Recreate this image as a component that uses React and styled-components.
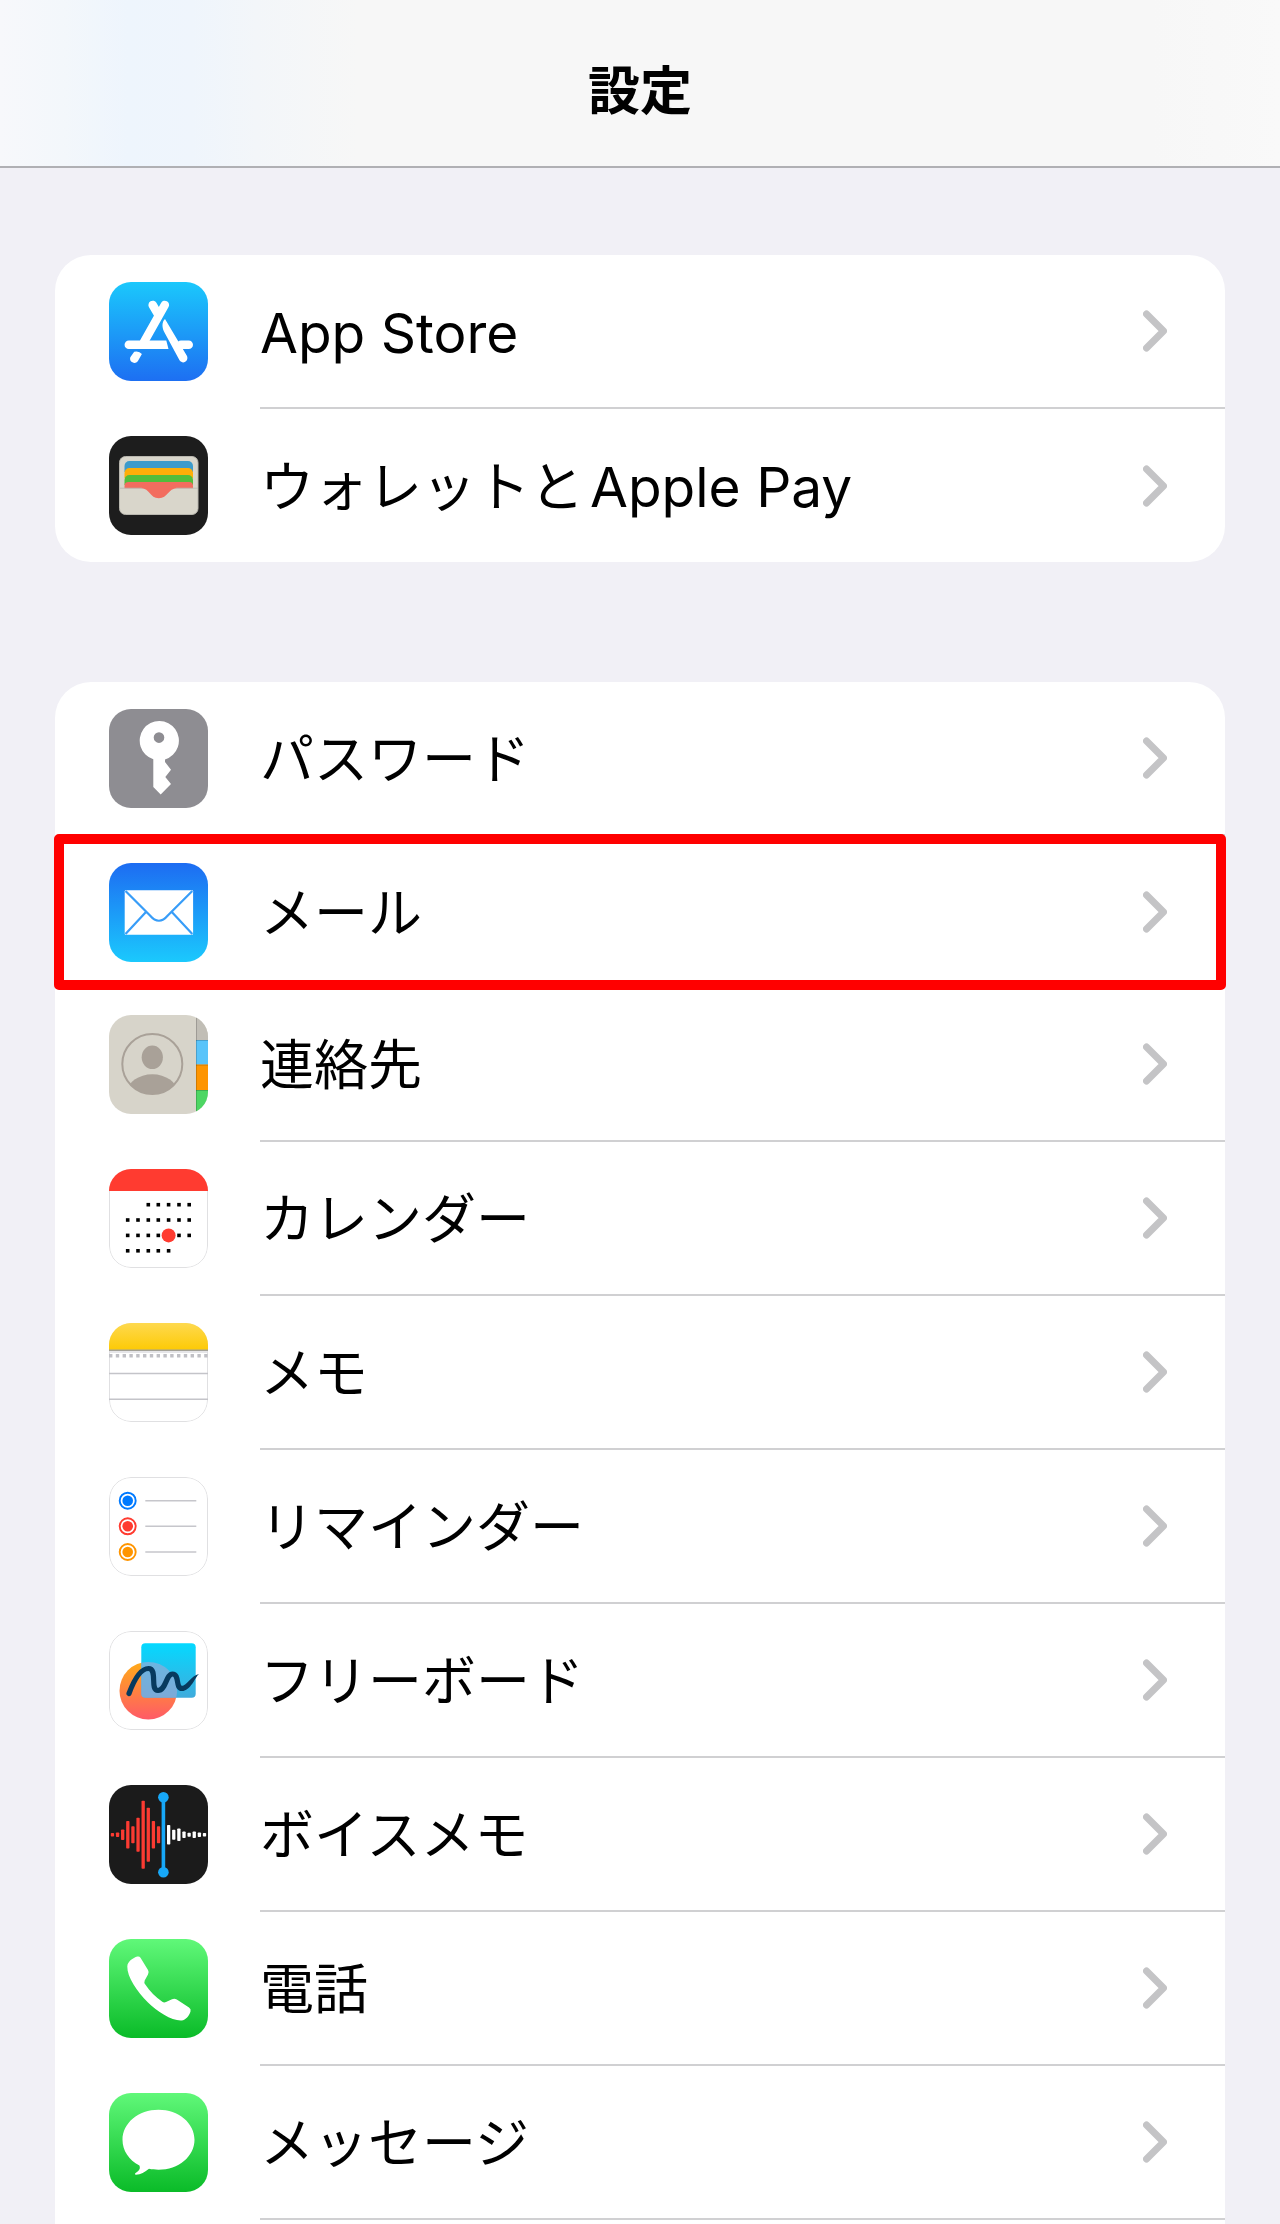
import React from 'react';
import styled, { createGlobalStyle } from 'styled-components';

const GlobalStyle = createGlobalStyle`
  *, *::before, *::after { box-sizing: border-box; }
  html { background: #f1f0f6; }
  body {
    margin: 0;
    color: #000;
    font-family: Inter, "Noto Sans CJK JP", sans-serif;
  }
`;

const Page = styled.div`
  display: flex;
  flex-direction: column;
  min-height: 100vh;
  background: #f1f0f6;
`;

const Header = styled.header`
  display: flex;
  justify-content: center;
  padding: 54px 0 36px;
  border-bottom: 2px solid #b0b0b4;
  background: linear-gradient(90deg, #f7f8fb 0%, #f3f7fb 5%, #eef5fd 10%, #eff5fc 15%, #f3f6f9 20%, #f7f7f7 28%, #f7f7f7 90%, #f9f9f9 100%);
`;

const Title = styled.h1`
  margin: 0;
  font-size: 52px;
  line-height: 76px;
  font-weight: 700;
`;

const Main = styled.main`
  display: flex;
  flex: 1;
  flex-direction: column;
  gap: 120px;
  padding: 87px 55px 0;
`;

const Card = styled.ul`
  margin: 0;
  padding: 0;
  list-style: none;
  background: #fff;
  border-radius: ${(p) => (p.$continues ? '36px 36px 0 0' : '36px')};
  flex: ${(p) => (p.$continues ? '1' : 'none')};
`;

const RowLink = styled.a`
  position: relative;
  display: flex;
  gap: 52px;
  padding-left: 54px;
  color: inherit;
  text-decoration: none;
`;

const Highlight = styled.span`
  position: absolute;
  inset: -2px -1px;
  border: 10px solid #f00;
  border-radius: 5px;
  pointer-events: none;
`;

const AppIcon = styled.svg`
  display: block;
  flex: none;
  width: 99px;
  height: 99px;
  margin-top: 27px;
  border-radius: 22px;
`;

const RowBody = styled.span`
  display: flex;
  flex: 1;
  align-items: center;
  justify-content: space-between;
  padding-right: 58px;
  border-bottom: ${(p) => (p.$divider ? '2px solid #d0d0d2' : 'none')};
`;

const Label = styled.span`
  display: flex;
  align-items: baseline;
  gap: 6px;
  font-size: 54px;
  line-height: 80px;
  padding: 38px 0 34px;
`;

const Latin = styled.span`
  font-size: 55px;
`;

const ChevronSvg = styled.svg`
  flex: none;
  width: 24px;
  height: 42px;
`;

const Chevron = () => (
  <ChevronSvg viewBox="0 0 24 42" fill="none" stroke="#c4c4c6" strokeWidth="7" strokeLinecap="round" strokeLinejoin="round" aria-hidden="true">
    <path d="M3.5 4 20.5 21 3.5 38" />
  </ChevronSvg>
);

const Gradient = ({ id, from, to }) => (
  <linearGradient id={id} x1="0" y1="0" x2="0" y2="1">
    <stop offset="0" stopColor={from} />
    <stop offset="1" stopColor={to} />
  </linearGradient>
);

const Frame = () => <rect x="0.5" y="0.5" width="98" height="98" rx="21.5" fill="none" stroke="#e0e0e2" />;

const AppStoreIcon = () => (
  <>
    <defs><Gradient id="store" from="#1bc8fc" to="#1d6ff2" /></defs>
    <rect width="99" height="99" fill="url(#store)" />
    <g stroke="#fff" strokeWidth="8.6" strokeLinecap="round" fill="none">
      <path d="M55.8 23 35 60M43.7 23l5 8.6M72 62.7h7.7" />
    </g>
    <path fill="#fff" d="M19.8 58.5H57.3L59.5 67H19.8a4.25 4.25 0 0 1 0-8.5zM56 37C52.5 40 53 46 55.5 50.5L70.5 78.3C74 83 80 79 78 74zM25.2 69.8Q30 68.600 32.900 72L28.800 79.200A4.300 4.300 0 0 1 21.300 75.300z" />
  </>
);

const WalletIcon = () => (
  <>
    <rect width="99" height="99" fill="#1d1d1d" />
    <rect x="10.5" y="20.5" width="78.5" height="58" rx="6" fill="#d9d6cb" stroke="#b9b7af" />
    <path d="M15.5 36v-6a5 5 0 0 1 5-5h58.5a5 5 0 0 1 5 5v6z" fill="#3d9bcb" />
    <path d="M15.5 42v-5a5 5 0 0 1 5-5h58.5a5 5 0 0 1 5 5v5z" fill="#feae08" />
    <path d="M15.5 49v-5a5 5 0 0 1 5-5h58.5a5 5 0 0 1 5 5v5z" fill="#53bd3b" />
    <path d="M15.5 52.2V50a4 4 0 0 1 4-4h60.500a4 4 0 0 1 4 4v2.200H68c-9 0-9 10-18.200 10S41 52.200 32 52.200z" fill="#f26d5f" />
    <path d="M11 52.2h22M67 52.2h22" stroke="#b9b7af" strokeWidth="0.8" />
  </>
);

const KeyIcon = () => (
  <>
    <rect width="99" height="99" fill="#8e8d92" />
    <path fill="#fff" fillRule="evenodd" d="M44.3 50.3A19.6 19.6 0 1 1 56 50.4V53l6 7.7-5.7 7.300 5.700 7-10.300 10.500-7.400-7.500zM50 23.300a5.300 5.300 0 1 0 0 10.600 5.300 5.300 0 0 0 0-10.600z" />
  </>
);

const MailIcon = () => (
  <>
    <defs><Gradient id="mail" from="#1d6cf2" to="#1bc9fd" /></defs>
    <rect width="99" height="99" fill="url(#mail)" />
    <rect x="15.7" y="27.3" width="68.4" height="44.4" rx="1" fill="#fff" />
    <path d="M16.5 28 41 52.5Q49.9 63 58.8 52.5L83.3 28M36.5 49.5 16.5 71M63.3 49.5 83.3 71" fill="none" stroke="#389df8" strokeWidth="2.2" />
  </>
);

const ContactsIcon = () => (
  <>
    <defs><clipPath id="person"><circle cx="43.3" cy="49" r="30" /></clipPath></defs>
    <rect width="99" height="99" fill="#d7d4ca" />
    <rect x="87" width="12" height="25" fill="#c1beb6" />
    <rect x="87" y="25" width="12" height="24.5" fill="#5ac4fa" />
    <rect x="87" y="49.5" width="12" height="25.5" fill="#fe9502" />
    <rect x="87" y="75" width="12" height="24" fill="#4dd663" />
    <path d="M87.5 0v99M87 25.5h12M87 50h12M87 75.5h12" stroke="#000" strokeOpacity="0.18" />
    <circle cx="43.3" cy="49" r="30" fill="none" stroke="#a9a198" strokeWidth="2" />
    <ellipse cx="43.3" cy="42.3" rx="10.6" ry="11.8" fill="#a9a198" />
    <ellipse cx="43.3" cy="77" rx="25" ry="17.7" fill="#a9a198" clipPath="url(#person)" />
  </>
);

const calendarColumns = [18.7, 29, 39.3, 49.3, 59.6, 70, 80.2];
const calendarRows = [
  { y: 35.7, from: 2, to: 6 },
  { y: 51, from: 0, to: 6 },
  { y: 66.4, from: 0, to: 6 },
  { y: 81.8, from: 0, to: 4 },
];

const CalendarIcon = () => (
  <>
    <rect width="99" height="99" fill="#fff" />
    <Frame />
    <rect width="99" height="22" fill="#ff3b30" />
    {calendarRows.map((row) =>
      calendarColumns.slice(row.from, row.to + 1).map((x) => (
        <rect key={`${x}-${row.y}`} x={x - 1.8} y={row.y - 1.8} width="3.6" height="3.6" />
      ))
    )}
    <circle cx="59.6" cy="66.4" r="7" fill="#ff3b30" />
  </>
);

const NotesIcon = () => (
  <>
    <defs><Gradient id="notes" from="#fed94f" to="#fdca05" /></defs>
    <rect width="99" height="99" fill="#fff" />
    <Frame />
    <rect width="99" height="27" fill="url(#notes)" />
    <path d="M0 27.3h99" stroke="#a3a195" strokeWidth="1.6" />
    <path d="M0 29h99" stroke="#dcdce0" strokeWidth="1.6" />
    <path d="M0 32.7h99" stroke="#c0c0c5" strokeWidth="3.4" strokeDasharray="3.4 3.4" />
    <path d="M0 50.5h99M0 76.3h99" stroke="#c4c4c9" strokeWidth="1.6" />
  </>
);

const reminders = [
  { y: 23.7, color: '#007aff' },
  { y: 49.3, color: '#ff3b30' },
  { y: 75, color: '#ff9500' },
];

const RemindersIcon = () => (
  <>
    <rect width="99" height="99" fill="#fff" />
    <Frame />
    {reminders.map(({ y, color }) => (
      <g key={y}>
        <circle cx="18.7" cy={y} r="8" fill="none" stroke={color} strokeWidth="1.9" />
        <circle cx="18.7" cy={y} r="5.3" fill={color} />
        <path d={`M36.3 ${y}H87.3`} stroke="#c6c6cb" strokeWidth="1.6" />
      </g>
    ))}
  </>
);

const FreeformIcon = () => (
  <>
    <defs>
      <Gradient id="board" from="#04d9ff" to="#40abdc" />
      <Gradient id="ball" from="#ffab18" to="#ff5a67" />
      <clipPath id="sheet"><rect x="32.3" y="12.3" width="54.4" height="54.4" rx="4" /></clipPath>
    </defs>
    <rect width="99" height="99" fill="#fff" />
    <Frame />
    <circle cx="39.3" cy="59.7" r="28.8" fill="url(#ball)" />
    <rect x="32.3" y="12.3" width="54.4" height="54.4" rx="4" fill="url(#board)" />
    <circle cx="39.3" cy="59.7" r="28.8" fill="#a3a8d4" fillOpacity="0.6" clipPath="url(#sheet)" />
    <path d="M20 62.5C25 49 32 37.5 39.5 37.5 49 37.5 40.5 59.5 49 59.5 57 59.5 57 43 63.5 43 71 43 66 57.5 73 57.5" fill="none" stroke="#073a5e" strokeWidth="5.2" strokeLinecap="round" strokeLinejoin="round" />
    <path d="M72.5 55C78 55 82 44.5 90 43c-4 3-8 17-17.5 17z" fill="#073a5e" />
  </>
);

const redBars = [3.5, 4.5, 10.5, 27.5, 17, 34, 68, 54, 27.5, 17];
const whiteBars = [19.5, 10, 12.5, 6.5, 4, 6.5, 4.5, 3.5];

const VoiceMemosIcon = () => (
  <>
    <rect width="99" height="99" fill="#1b1b1b" />
    {redBars.map((h, i) => (
      <rect key={`r${i}`} x={1.8 + i * 5.12} y={49.7 - h / 2} width="3.3" height={h} rx="0.8" fill="#fb3b32" />
    ))}
    {whiteBars.map((h, i) => (
      <rect key={`w${i}`} x={58 + i * 5.12} y={49.7 - h / 2} width="3.3" height={h} rx="0.8" fill="#fff" />
    ))}
    <rect x="52.6" y="12" width="3.6" height="75" fill="#17a8f8" />
    <circle cx="54.4" cy="12.3" r="5.3" fill="#17a8f8" />
    <circle cx="54.4" cy="87.3" r="5.3" fill="#17a8f8" />
  </>
);

const PhoneIcon = () => (
  <>
    <defs><Gradient id="phone" from="#60f879" to="#0abb28" /></defs>
    <rect width="99" height="99" fill="url(#phone)" />
    <path fill="#fff" d="M18.3 27.5C18.5 22.5 24 19 28.3 17.6Q30.3 17 31.5 18.7L39 31Q40.3 33 39 35.5L35.7 41.5Q34.8 43.5 36.3 45.5C41 52.5 46.5 58 53.3 62.7Q55 64 57 63L63 60.2Q65.5 59 67.8 60.5L80 68.5Q82.3 70 81.5 72.5C80 77 77 81 72.5 81.5 63 82 48 72.5 39 63.5 28 52.5 18 38 18.3 27.5z" />
  </>
);

const MessagesIcon = () => (
  <>
    <defs><Gradient id="messages" from="#60f879" to="#0abb28" /></defs>
    <rect width="99" height="99" fill="url(#messages)" />
    <path fill="#fff" d="M49.5 16.7c20 0 36 13.3 36 30s-16 30-36 30c-3.5 0-6.5-.2-9.5-.9-4 3.300-8.500 5.900-13 6-1.300-.1-1.300-1.100-.4-1.800 3-2 5.200-3.900 3.800-7.500C19.800 66.800 13.500 57.500 13.500 46.700c0-16.700 16-30 36-30z" />
  </>
);

const groups = [
  {
    continues: false,
    items: [
      { latin: 'App Store', Icon: AppStoreIcon },
      { label: 'ウォレットと', latin: 'Apple Pay', Icon: WalletIcon },
    ],
  },
  {
    continues: true,
    items: [
      { label: 'パスワード', Icon: KeyIcon },
      { label: 'メール', Icon: MailIcon, highlighted: true },
      { label: '連絡先', Icon: ContactsIcon },
      { label: 'カレンダー', Icon: CalendarIcon },
      { label: 'メモ', Icon: NotesIcon },
      { label: 'リマインダー', Icon: RemindersIcon },
      { label: 'フリーボード', Icon: FreeformIcon },
      { label: 'ボイスメモ', Icon: VoiceMemosIcon },
      { label: '電話', Icon: PhoneIcon },
      { label: 'メッセージ', Icon: MessagesIcon },
    ],
  },
];

const SettingsRow = ({ label, latin, Icon, highlighted, divider }) => (
  <li>
    <RowLink href="#">
      <AppIcon viewBox="0 0 99 99" aria-hidden="true"><Icon /></AppIcon>
      <RowBody $divider={divider}>
        <Label>
          {label}
          {latin && <Latin>{latin}</Latin>}
        </Label>
        <Chevron />
      </RowBody>
      {highlighted && <Highlight />}
    </RowLink>
  </li>
);

export default function App() {
  return (
    <>
      <GlobalStyle />
      <Page lang="ja">
        <Header><Title>設定</Title></Header>
        <Main>
          {groups.map((group, g) => (
            <Card key={g} $continues={group.continues}>
              {group.items.map((item, i) => (
                <SettingsRow
                  key={item.label || item.latin}
                  {...item}
                  divider={!item.highlighted && (group.continues || i < group.items.length - 1)}
                />
              ))}
            </Card>
          ))}
        </Main>
      </Page>
    </>
  );
}
